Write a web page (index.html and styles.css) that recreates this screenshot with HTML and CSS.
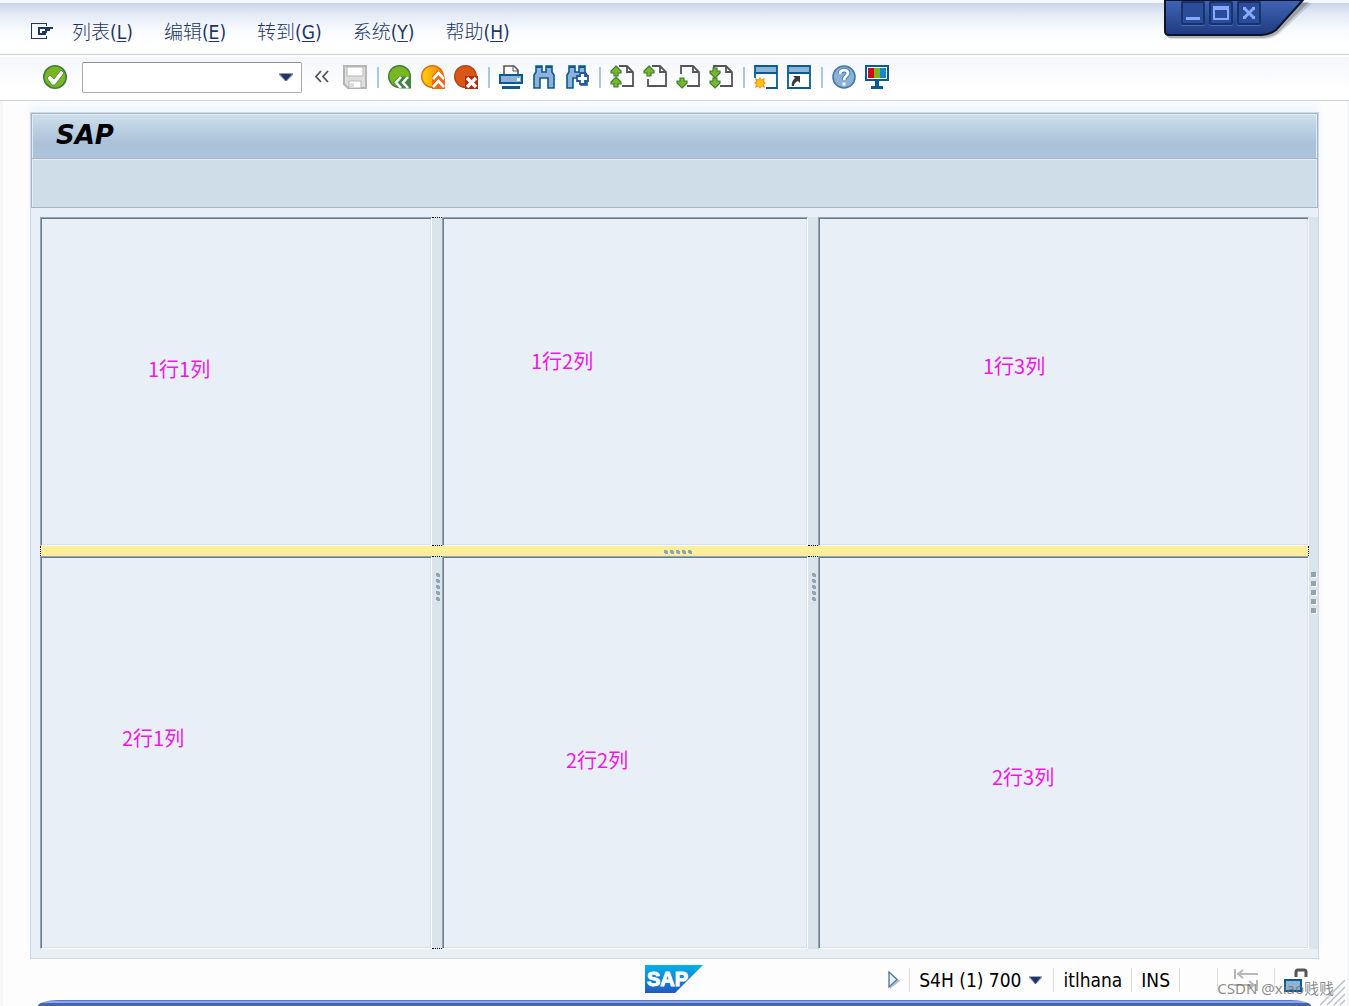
FILE: index.html
```html
<!DOCTYPE html>
<html lang="zh-CN">
<head>
<meta charset="utf-8">
<title>SAP</title>
<link rel="stylesheet" href="styles.css">
</head>
<body>
<svg class="defs" aria-hidden="true">
  <defs>
    <linearGradient id="frame" x1="0" y1="0" x2="0" y2="1"><stop offset="0" stop-color="#4065b4"/><stop offset="1" stop-color="#1f3a80"/></linearGradient>
    <linearGradient id="brand" x1="0" y1="0" x2="0" y2="1"><stop offset="0" stop-color="#00b2ea"/><stop offset="1" stop-color="#205bbd"/></linearGradient>
    <linearGradient id="amber" x1="0" y1="0" x2="1" y2="0"><stop offset="0.2" stop-color="#ffc60a"/><stop offset="1" stop-color="#f07a10"/></linearGradient>
    <path id="up" d="M6 1l5 5v2H8v3H4V8H1V6z" fill="#7ab828" stroke="#3d7d3c" stroke-width="1.2"/>
    <path id="down" d="M6 12l5-5V5H8V2H4v3H1v2z" fill="#7ab828" stroke="#3d7d3c" stroke-width="1.2"/>
  </defs>
</svg>

<nav class="menubar" aria-label="菜单">
  <button class="menu-icon" aria-label="窗口菜单">
    <svg width="22" height="17" viewBox="0 0 22 17" fill="none" stroke="#213564" shape-rendering="crispEdges"><path d="M15.500 3V.5H.5v15h15V13"/><path d="M7.500 4v8M7 5h15M15 11H7M18 5v2h-3v2h-4" stroke-width="2"/></svg>
  </button>
  <button class="menu-item">列表<span>(<u>L</u>)</span></button>
  <button class="menu-item">编辑<span>(<u>E</u>)</span></button>
  <button class="menu-item">转到<span>(<u>G</u>)</span></button>
  <button class="menu-item">系统<span>(<u>Y</u>)</span></button>
  <button class="menu-item">帮助<span>(<u>H</u>)</span></button>
</nav>

<div class="window-controls">
  <svg class="window-frame" width="150" height="44" viewBox="0 0 150 44">
    <path d="M5 3v32q0 4 5 4h92q8 0 15-5l33-31z" fill="#000" opacity=".12"/>
    <path d="M4 2v31q0 5 5 5h92q8 0 15-5l31-31z" fill="#000" opacity=".2"/>
    <path d="M3 0v31q0 4 4 4h93q7 0 14-5L141 0z" fill="url(#frame)" stroke="#0b1328" stroke-width="2"/>
  </svg>
  <div class="window-buttons">
    <button aria-label="最小化"><svg width="16" height="16" viewBox="0 0 16 16"><path d="M1 12h14v3H1z" fill="#86a9fc"/></svg></button>
    <button aria-label="最大化"><svg width="16" height="16" viewBox="0 0 16 16"><path d="M0 1h16v14H0zM2 5v8h12V5z" fill="#86a9fc" fill-rule="evenodd"/></svg></button>
    <button aria-label="关闭"><svg width="16" height="16" viewBox="0 0 16 16"><path d="M3 3l10 10M13 3L3 13" stroke="#86a9fc" stroke-width="3"/><path d="M2 2h3v3H2zM11 2h3v3h-3zM2 11h3v3H2zM11 11h3v3h-3z" fill="#86a9fc"/></svg></button>
  </div>
</div>

<div class="toolbar" role="toolbar" aria-label="工具栏">
  <button class="tool enter" aria-label="回车"><svg viewBox="0 0 24 24"><circle cx="12" cy="12" r="11.2" fill="#78b81e" stroke="#477b43" stroke-width="1.6"/><path d="M4 13l3-3 4 4 7-9 3 3-9 12h-3z" fill="#fff" stroke="#477b43" stroke-width=".8"/></svg></button>
  <div class="command">
    <input type="text" aria-label="命令字段">
    <button aria-label="命令历史"><svg width="14" height="8" viewBox="0 0 14 8"><path d="M0 0h14v2L8 8H6L0 2z" fill="#8c9bb9"/><path d="M1 1h12L7 8z" fill="#213564"/></svg></button>
  </div>
  <button class="tool collapse" aria-label="收起"><svg viewBox="0 0 24 24" fill="none" stroke="#555" stroke-width="1.8"><path d="M11 6l-5 5.500 5 5.500M18 6l-5 5.500 5 5.500"/></svg></button>
  <button class="tool" aria-label="保存"><svg viewBox="0 0 24 24"><path d="M1 1h22v22H5l-4-4z" fill="#dedede" stroke="#b5b5b5" stroke-width="2"/><path d="M4 2h16v9H4z" fill="#fff" stroke="#b5b5b5"/><path d="M6 16h12v7H6z" fill="#fff" stroke="#b5b5b5"/><path d="M7 18h4v5H7z" fill="#dedede"/></svg></button>
  <span class="sep"></span>
  <button class="tool" aria-label="返回"><svg viewBox="0 0 24 24"><circle cx="11.500" cy="11.500" r="10.800" fill="#78b81e" stroke="#477b43" stroke-width="1.400"/><path d="M5 17.500l6-6h12v12H11z" fill="#3f8540"/><path d="M13 12l-5 5.500 5 5.500M20 12l-5 5.500 5 5.500" fill="none" stroke="#fff" stroke-width="2.600"/></svg></button>
  <button class="tool" aria-label="退出"><svg viewBox="0 0 24 24"><circle cx="11.500" cy="11.500" r="10.800" fill="url(#amber)" stroke="#e56b12" stroke-width="1.400"/><path d="M11 11l6-6 7 7v12H11z" fill="#eb6815"/><path d="M12 14l5.500-6 5.500 6M12 22l5.500-6 5.500 6" fill="none" stroke="#fff" stroke-width="2.600"/></svg></button>
  <button class="tool" aria-label="取消"><svg viewBox="0 0 24 24"><circle cx="11.500" cy="11.500" r="10.800" fill="#d95714" stroke="#b84318" stroke-width="1.400"/><path d="M11 11h13v13H11z" fill="#b52b10"/><path d="M13 13l9 9M22 13l-9 9" stroke="#fff" stroke-width="3.400"/></svg></button>
  <span class="sep"></span>
  <button class="tool" aria-label="打印"><svg viewBox="0 0 24 24"><path d="M5 9V1h10l4 4v4" fill="#fff" stroke="#555" stroke-width="1.600"/><path d="M14 1v5h5" fill="none" stroke="#555"/><path d="M1 10h22v8H1z" fill="#8fb2d7" stroke="#075b92" stroke-width="2"/><path d="M18 13h3v3h-3z" fill="#fff"/><path d="M3 21h18v3H3z" fill="#075b92"/></svg></button>
  <button class="tool" aria-label="查找"><svg viewBox="0 0 24 24"><path d="M4 1h6v6h4V1h6v6l2 3v13h-6V13H8v10H2V10l2-3z" fill="#8fb2d7" stroke="#075b92" stroke-width="1.600"/><path d="M4 2h6M14 2h6" stroke="#075b92" stroke-width="2"/></svg></button>
  <button class="tool" aria-label="继续查找"><svg viewBox="0 0 24 24"><path d="M4 1h6v6h4V1h6v6l2 3v10h-6v-7H8v10H2V10l2-3z" fill="#8fb2d7" stroke="#075b92" stroke-width="1.600"/><path d="M4 2h6M14 2h6" stroke="#075b92" stroke-width="2"/><path d="M15 8h5v3h3v5h-3v3h-5v-3h-3v-5h3z" fill="#fff" stroke="#2a559c" stroke-width="1.800"/></svg></button>
  <span class="sep"></span>
  <button class="tool" aria-label="首页"><svg viewBox="0 0 24 24"><path d="M9 1h8l6 6v14H12M17 1v6h6" fill="none" stroke="#555" stroke-width="1.800"/><use href="#up"/><use href="#up" y="11"/></svg></button>
  <button class="tool" aria-label="上一页"><svg viewBox="0 0 24 24"><path d="M9 1h8l6 6v14H5v-7M17 1v6h6" fill="none" stroke="#555" stroke-width="1.800"/><use href="#up"/></svg></button>
  <button class="tool" aria-label="下一页"><svg viewBox="0 0 24 24"><path d="M5 9V1h12l6 6v14H11M17 1v6h6" fill="none" stroke="#555" stroke-width="1.800"/><use href="#down" y="11"/></svg></button>
  <button class="tool" aria-label="末页"><svg viewBox="0 0 24 24"><path d="M5 3V1h12l6 6v14H11M17 1v6h6" fill="none" stroke="#555" stroke-width="1.800"/><use href="#down" y="1"/><use href="#down" y="11"/></svg></button>
  <span class="sep"></span>
  <button class="tool" aria-label="新建会话"><svg viewBox="0 0 24 24"><path d="M1 1h22v7H1z" fill="#8fb2d7"/><path d="M1 13V1h22v22H12M1 8h22" fill="none" stroke="#075b92" stroke-width="1.800"/><path d="M6 12l1.500 2.500L11 13l-1 3.500 2 1.500-2 1.500 1 3.500-3.500-1.500L6 24l-1.500-2.500L1 23l1-3.500L0 18l2-1.500L1 13l3.500 1.500z" fill="#f7941e"/><circle cx="6" cy="18" r="3.500" fill="#ffc20e"/></svg></button>
  <button class="tool" aria-label="创建快捷方式"><svg viewBox="0 0 24 24"><path d="M1 1h22v22H1z" fill="#fff"/><path d="M1 1h22v7H1z" fill="#8fb2d7"/><path d="M1 1h22v22H1zM1 8h22" fill="none" stroke="#075b92" stroke-width="1.800"/><path d="M6 11h7v7l-2-2c-3 1-4 3-4 5H5c-1-3 1-6 3-8z" fill="#3b3b3b"/></svg></button>
  <span class="sep"></span>
  <button class="tool" aria-label="帮助"><svg viewBox="0 0 24 24"><circle cx="12" cy="12" r="11" fill="#8db1d6" stroke="#427ba9" stroke-width="1.600"/><path d="M8 9c0-5 8-5 8-1 0 3-4 3-4 7" fill="none" stroke="#427ba9" stroke-width="4.600"/><path d="M8 9c0-5 8-5 8-1 0 3-4 3-4 7M12 17.500v3" fill="none" stroke="#fff" stroke-width="2.800"/></svg></button>
  <button class="tool" aria-label="自定义布局"><svg viewBox="0 0 24 24"><path d="M1 1h22v14H1z" fill="#fff" stroke="#075b92" stroke-width="2"/><path d="M3 3h6v10H3z" fill="#cc0a17"/><path d="M9 3h6v10H9z" fill="#78b81e"/><path d="M15 3h6v10h-6z" fill="#1688d0"/><path d="M10 16h4v5h4v3H6v-3h4z" fill="#075b92"/></svg></button>
</div>

<main class="screen">
  <header class="screen-head">
    <h1>SAP</h1>
    <div class="app-toolbar"></div>
  </header>
  <div class="splitter">
    <section class="pane p11"><span>1行1列</span></section>
    <div class="bar bar-a top active"></div>
    <section class="pane p12"><span>1行2列</span></section>
    <div class="bar bar-b top"></div>
    <section class="pane p13"><span>1行3列</span></section>

    <div class="row-bar"><svg class="grip" width="28" height="4" viewBox="0 0 28 4"><path d="M0 0h3v1h1v3H1V3H0zM6 0h3v1h1v3H7V3H6zM12 0h3v1h1v3h-3V3h-1zM18 0h3v1h1v3h-3V3h-1zM24 0h3v1h1v3h-3V3h-1z" fill="#94a3b4"/></svg></div>

    <section class="pane p21"><span>2行1列</span></section>
    <div class="bar bar-a low active"><svg class="grip" width="4" height="28" viewBox="0 0 4 28"><path d="M0 0h3v1h1v3H1V3H0zM0 6h3v1h1v3H1V9H0zM0 12h3v1h1v3H1v-1H0zM0 18h3v1h1v3H1v-1H0zM0 24h3v1h1v3H1v-1H0z" fill="#94a3b4"/></svg></div>
    <section class="pane p22"><span>2行2列</span></section>
    <div class="bar bar-b low"><svg class="grip" width="4" height="28" viewBox="0 0 4 28"><path d="M0 0h3v1h1v3H1V3H0zM0 6h3v1h1v3H1V9H0zM0 12h3v1h1v3H1v-1H0zM0 18h3v1h1v3H1v-1H0zM0 24h3v1h1v3H1v-1H0z" fill="#94a3b4"/></svg></div>
    <section class="pane p23"><span>2行3列</span></section>
    <div class="edge-bar"></div>
    <div class="edge-grip"><svg width="6" height="42" viewBox="0 0 6 42"><path d="M1 1h5v5H1zM1 10h5v5H1zM1 19h5v5H1zM1 28h5v5H1zM1 37h5v5H1z" fill="#fff"/><path d="M0 0h5v5H0zM0 9h5v5H0zM0 18h5v5H0zM0 27h5v5H0zM0 36h5v5H0z" fill="#94a3b4"/></svg></div>
  </div>
</main>

<footer class="statusbar">
  <svg class="logo" width="58" height="28" viewBox="0 0 58 28" role="img" aria-label="SAP"><path d="M0 0h58L30 28H0z" fill="url(#brand)"/><text x="2" y="21" class="logo-text">SAP</text></svg>
  <div class="status">
    <button class="expand" aria-label="展开"><svg width="12" height="18" viewBox="0 0 12 18"><path d="M2 2l10 8-10 8z" fill="#b6bec6"/><path d="M1 1l8 7.500L1 16z" fill="#eaf3fa" stroke="#587c9e" stroke-width="1.400"/></svg></button>
    <span class="rule"></span>
    <button class="system">S4H (1) 700 <svg width="13" height="8" viewBox="0 0 13 8"><path d="M0 0h13v2L7 8H6L0 2z" fill="#9eaac4"/><path d="M1 1h11L6.500 8z" fill="#213564"/></svg></button>
    <span class="rule wide"></span>
    <span>itlhana</span>
    <span class="rule"></span>
    <span>INS</span>
    <span class="rule"></span>
    <span class="rule spaced"></span>
    <svg class="transfer" width="24" height="24" viewBox="0 0 24 24" fill="none" stroke="#b8b8b8" stroke-width="2"><path d="M1 1v10M3 6h21M9 2L4 6l5 4M23 12v11M0 17h20M15 13l5 4-5 4"/></svg>
    <span class="rule"></span>
    <svg width="24" height="24" viewBox="0 0 24 24"><path d="M12 9V4q0-2 2-2h6q2 0 2 2v5" fill="none" stroke="#555" stroke-width="3"/><path d="M1 12h16v11H1z" fill="#8fb2d7" stroke="#075b92" stroke-width="2"/></svg>
  </div>
</footer>
<div class="frame-edge"></div>
<svg class="resize" width="26" height="26" viewBox="0 0 26 26" stroke="#b9c1d1" stroke-width="1.500"><path d="M0 25L25 0M7 25L25 7M14 25l11-11M20 25l5-5"/></svg>
<div class="watermark">CSDN @xiao贱贱</div>
</body>
</html>
```
FILE: styles.css
```css
* { box-sizing: border-box; }

body {
  margin: 0;
  min-height: 100vh;
  display: flex;
  flex-direction: column;
  position: relative;
  overflow-x: hidden;
  background: #fdfdfe;
  box-shadow: inset 3px 0 #f6f7f9, inset -2px 0 #f6f7f9;
  color: #000;
  font: 19px/24px "DejaVu Sans Condensed", "Noto Sans CJK SC", sans-serif;
}

button {
  margin: 0;
  padding: 0;
  border: 0;
  background: none;
  color: inherit;
  font: inherit;
}

svg { display: block; flex: none; }

.defs { position: absolute; width: 0; height: 0; }

.menubar {
  display: flex;
  align-items: center;
  gap: 31px;
  height: 55px;
  padding: 9px 31px 0;
  border-bottom: 1px solid #c3cddc;
  background: linear-gradient(#f4f8fe 0, #f4f8fe 3px, #c9d5e9 3px, #e3eaf5 14px, #f8fafd 30px, #fff 44px);
  color: #213564;
  font: 300 19px/24px "Noto Sans CJK SC", sans-serif;
}

.menu-icon { margin-right: -12px; }
.menu-item { white-space: nowrap; }
.menu-item span { font-family: "DejaVu Sans Condensed", sans-serif; font-weight: 400; }
.menu-item u { text-underline-offset: 2px; }

.window-controls {
  position: absolute;
  top: 0;
  right: 37px;
  width: 150px;
}

.window-frame { position: absolute; top: 0; left: 0; }

.window-buttons {
  position: relative;
  display: flex;
  gap: 4px;
  padding: 1px 0 0 19px;
}

.window-buttons button {
  display: grid;
  place-items: center;
  width: 24px;
  height: 24px;
  border: 2px solid #19326d;
  border-radius: 2px;
  background: #2b4c98;
  box-shadow: 0 1px #456bb7;
}

.toolbar {
  display: flex;
  align-items: center;
  gap: 9px;
  height: 46px;
  padding: 0 43px 1px;
  border-bottom: 1px solid #c9d1de;
  background: linear-gradient(#fff 0, #fff 2px, #f4f6fa 2px, #fff 34px);
}

.tool { flex: none; width: 24px; height: 24px; }
.tool svg { width: 24px; height: 24px; }
.enter { margin-right: 6px; }
.collapse { margin-left: -1px; }

.command {
  display: flex;
  align-items: center;
  width: 220px;
  height: 31px;
  padding-right: 8px;
  border: 1px solid #a6a8ab;
  border-top-color: #8e9195;
  border-radius: 2px;
  background: #fff;
}

.command input {
  flex: 1;
  min-width: 0;
  height: 27px;
  padding: 0 6px;
  border: 0;
  outline: 0;
  background: none;
  font: inherit;
}

.sep { width: 3px; height: 21px; border-right: 2px solid #aac8e2; }

.screen {
  flex: 1;
  display: flex;
  flex-direction: column;
  margin: 11px 30px 0;
  border: 1px solid #cfd9e6;
  background: #e8eff7;
  box-shadow: 0 -8px 6px #f3f6fa;
}

.screen-head { border: 1px solid #a5b5c6; }

h1 {
  height: 45px;
  margin: 0;
  padding: 5px 24px;
  border-bottom: 1px solid #a5b5c6;
  background: linear-gradient(#cfdfeb, #a9c1d9 68%, #adc4dc);
  box-shadow: inset 1px 1px #e0eaf3, inset -1px 0 #e0eaf3;
  font: italic bold 26px/32px "DejaVu Sans", sans-serif;
}

.app-toolbar {
  height: 48px;
  background: #cfdde8;
  box-shadow: inset 1px 1px #e6eef5, inset -1px 0 #e6eef5;
}

.splitter {
  flex: 1;
  display: grid;
  grid-template-columns: 392fr 10px 366fr 10px 491fr 9px;
  grid-template-rows: 329fr 10px 393fr;
  padding: 9px 0 9px 9px;
}

.pane {
  border: 1px solid #93a3b3;
  border-right-color: #fff;
  border-bottom-color: #f8fbfd;
  box-shadow: inset 1px 1px #667d92, inset -1px -1px #d9e2ea;
  color: #f018e4;
  font: 20px/30px "Noto Sans CJK SC", sans-serif;
}

.p11 { grid-area: 1 / 1; padding: 136px 0 0 107px; }
.p12 { grid-area: 1 / 3; padding: 128px 0 0 88px; }
.p13 { grid-area: 1 / 5; padding: 133px 0 0 164px; }
.p21 { grid-area: 3 / 1; padding: 166px 0 0 81px; }
.p22 { grid-area: 3 / 3; padding: 188px 0 0 123px; }
.p23 { grid-area: 3 / 5; padding: 205px 0 0 173px; }

.bar { background: #dae4eb; border: 0 solid transparent; }
.bar-a { grid-column: 2; }
.bar-b { grid-column: 4; }
.top { grid-row: 1; border-bottom: 1px dotted #000; }
.low { grid-row: 3; border-top: 1px dotted #000; padding: 16px 0 0 4px; }
.active.top { border-top: 1px dotted #000; }
.active.low { border-bottom: 1px dotted #000; }

.row-bar {
  grid-area: 2 / 1 / 3 / 6;
  display: flex;
  justify-content: center;
  align-items: center;
  padding: 2px 0 0 6px;
  border: 0 dotted #000;
  border-width: 0 1px;
  background: #ffee9b;
}

.edge-bar { grid-area: 1 / 6 / 4 / 7; background: #dae4eb; }
.edge-grip { grid-area: 3 / 6; padding: 16px 0 0 2px; }

.statusbar {
  display: grid;
  grid-template-columns: 1fr auto 1fr;
  align-items: center;
  height: 41px;
  padding: 0 41px 1px 39px;
}

.logo { grid-column: 2; }
.logo-text {
  fill: #fff;
  stroke: #fff;
  stroke-width: 1px;
  font: bold 20px "Liberation Sans", sans-serif;
}

.status {
  display: flex;
  justify-content: flex-end;
  align-items: center;
  gap: 9px;
  padding-top: 2px;
  white-space: nowrap;
}

.system { display: flex; align-items: center; gap: 8px; }
.rule { width: 1px; height: 24px; background: #dcdfe4; }
.wide { margin-left: 2px; }
.spaced { margin-left: 28px; }
.transfer { margin: 0 7px; }

.frame-edge {
  height: 6px;
  margin: 0 38px;
  border-radius: 20px 20px 0 0 / 6px 6px 0 0;
  background: linear-gradient(#5878c4 1px, #89a6e6 1px, #89a6e6 3px, #4464b4 3px);
}

.resize { position: absolute; right: 3px; bottom: 0; }

.watermark {
  position: absolute;
  right: 15px;
  bottom: 6px;
  color: rgba(110, 110, 110, .8);
  font: 15px/24px "Noto Sans", "Noto Sans CJK SC", sans-serif;
}
```
